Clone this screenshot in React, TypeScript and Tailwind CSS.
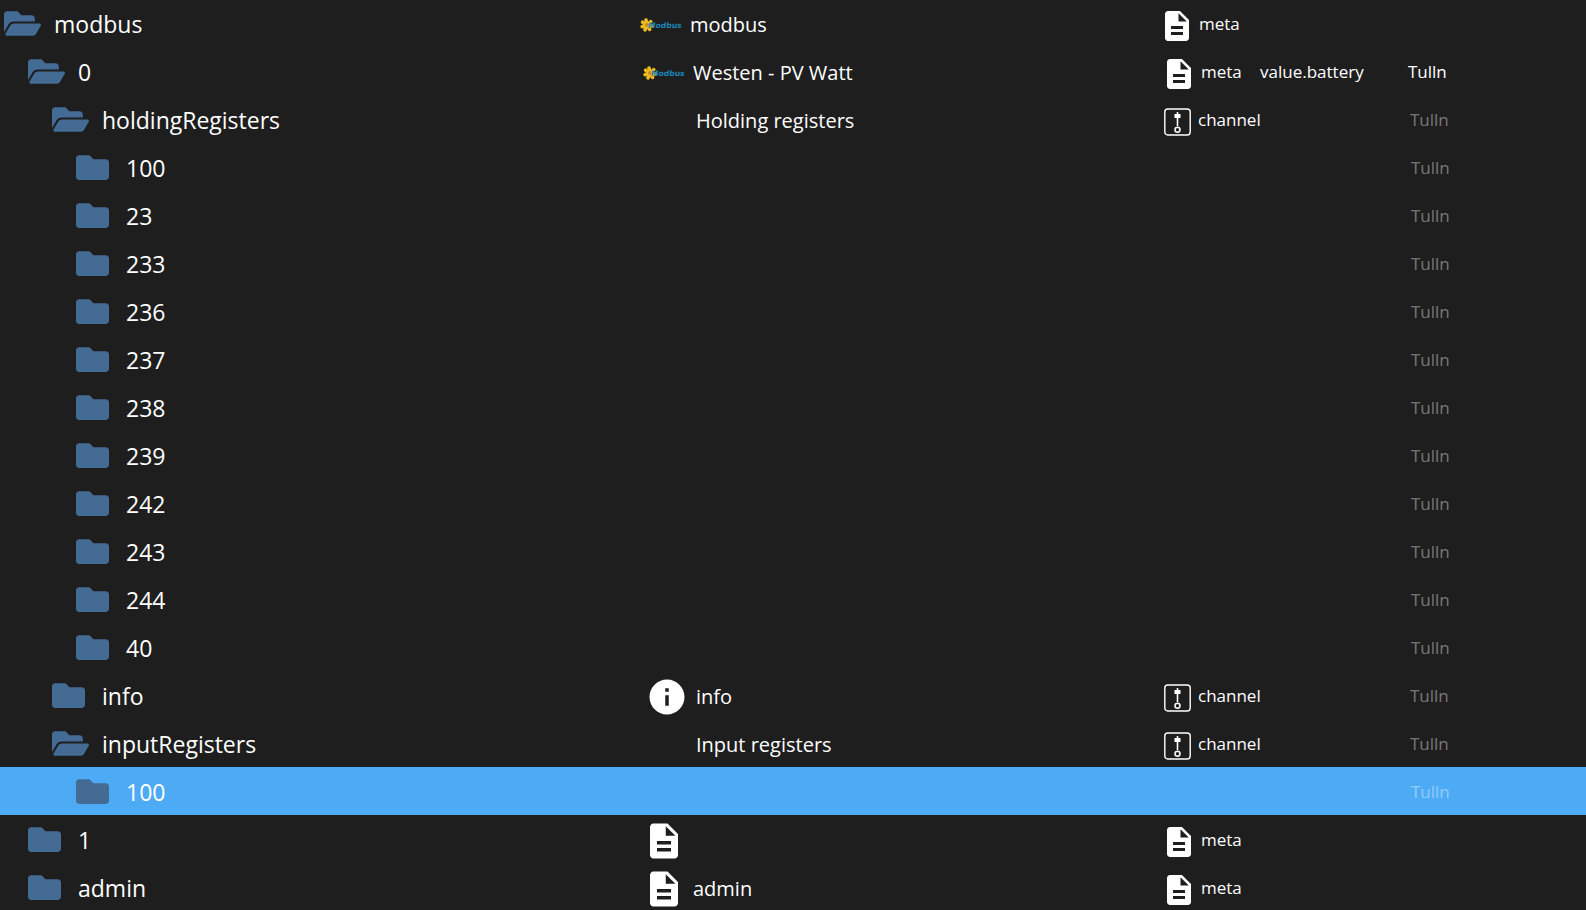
import { FaFolder, FaFolderOpen } from 'react-icons/fa';
import { MdDescription, MdInfo } from 'react-icons/md';

type IconName = 'modbus' | 'info' | 'document';

type TreeItem = {
  id: string;
  label: string;
  depth: 0 | 1 | 2 | 3;
  open?: boolean;
  icon?: IconName;
  name?: string;
  type?: 'meta' | 'channel';
  role?: string;
  room?: string;
  roomInherited?: boolean;
  selected?: boolean;
};

const registerItem = (label: string): TreeItem => ({
  id: `modbus.0.holdingRegisters.${label}`,
  label,
  depth: 3,
  room: 'Tulln',
  roomInherited: true,
});

const ITEMS: TreeItem[] = [
  { id: 'modbus', label: 'modbus', depth: 0, open: true, icon: 'modbus', name: 'modbus', type: 'meta' },
  {
    id: 'modbus.0',
    label: '0',
    depth: 1,
    open: true,
    icon: 'modbus',
    name: 'Westen - PV Watt',
    type: 'meta',
    role: 'value.battery',
    room: 'Tulln',
  },
  {
    id: 'modbus.0.holdingRegisters',
    label: 'holdingRegisters',
    depth: 2,
    open: true,
    name: 'Holding registers',
    type: 'channel',
    room: 'Tulln',
    roomInherited: true,
  },
  ...['100', '23', '233', '236', '237', '238', '239', '242', '243', '244', '40'].map(registerItem),
  {
    id: 'modbus.0.info',
    label: 'info',
    depth: 2,
    icon: 'info',
    name: 'info',
    type: 'channel',
    room: 'Tulln',
    roomInherited: true,
  },
  {
    id: 'modbus.0.inputRegisters',
    label: 'inputRegisters',
    depth: 2,
    open: true,
    name: 'Input registers',
    type: 'channel',
    room: 'Tulln',
    roomInherited: true,
  },
  {
    id: 'modbus.0.inputRegisters.100',
    label: '100',
    depth: 3,
    room: 'Tulln',
    roomInherited: true,
    selected: true,
  },
  { id: 'modbus.1', label: '1', depth: 1, icon: 'document', type: 'meta' },
  { id: 'modbus.admin', label: 'admin', depth: 1, icon: 'document', name: 'admin', type: 'meta' },
];

const TREE_INDENT = ['pl-1', 'pl-7', 'pl-[52px]', 'pl-[76px]'];
const NAME_INDENT = ['pl-0', 'pl-[3px]', 'pl-[6px]', 'pl-[8px]'];
const CELL_INDENT = ['pl-0', 'pl-[2px]', 'pl-1', 'pl-[5px]'];

function ModbusLogo() {
  return (
    <svg viewBox="0 0 42 14" className="block h-[14px] w-[42px]" role="img" aria-label="Modbus">
      <g stroke="#eebb1c" strokeWidth="3.6" strokeLinecap="round">
        <path d="M7 7 6 2" />
        <path d="M7 7l3.8-3.4" />
        <path d="M7 7l5 1" />
        <path d="M7 7l2.6 4.4" />
        <path d="M7 7l-2 4.8" />
        <path d="M7 7 2.2 8.6" />
        <path d="M7 7 2.6 4.2" />
      </g>
      <circle cx="7" cy="7" r="2" fill="#c98a1a" />
      <text
        x="8"
        y="10"
        fill="#1a86b8"
        fontFamily="DejaVu Sans, sans-serif"
        fontSize="7.6"
        fontStyle="italic"
        fontWeight="700">
        Modbus
      </text>
    </svg>
  );
}

function ChannelIcon() {
  return (
    <svg viewBox="0 0 27 28" className="block h-7 w-[27px] shrink-0" fill="none" stroke="white" aria-hidden="true">
      <rect x="0.8" y="1" width="25.4" height="26" rx="3" strokeWidth="1.4" />
      <path d="M13.5 4v14" strokeWidth="1.6" />
      <rect x="10.5" y="6" width="6" height="4" fill="white" stroke="none" />
      <circle cx="13.5" cy="21.8" r="2.5" strokeWidth="1.5" />
    </svg>
  );
}

function NameIcon({ icon }: { icon?: IconName }) {
  switch (icon) {
    case 'modbus':
      return <ModbusLogo />;
    case 'info':
      return <MdInfo size={42} className="shrink-0" />;
    case 'document':
      return <MdDescription size={42} className="shrink-0" />;
    default:
      return null;
  }
}

function TreeRow({ item }: { item: TreeItem }) {
  const cellIndent = CELL_INDENT[item.depth];

  return (
    <tr aria-selected={item.selected ?? false} className={item.selected ? 'h-12 bg-[#4dabf5]' : 'h-12'}>
      <td className={['p-0 pt-[2px]', TREE_INDENT[item.depth]].join(' ')}>
        <button type="button" aria-expanded={item.open ?? false} className="flex items-center text-[23px] leading-8">
          <span className="flex w-[50px] shrink-0 pb-[2px] text-[#436b93]">
            {item.open ? <FaFolderOpen className="h-[33px] w-[37px]" /> : <FaFolder className="h-[33px] w-[33px]" />}
          </span>
          {item.label}
        </button>
      </td>
      <td className={['p-0 pt-1', NAME_INDENT[item.depth]].join(' ')}>
        <div className="flex items-center text-[20px] leading-8">
          <span className="flex w-[50px] shrink-0">
            <NameIcon icon={item.icon} />
          </span>
          {item.name}
        </div>
      </td>
      <td className={['p-0 pt-[2px]', cellIndent].join(' ')}>
        {item.type && (
          <div className={['flex items-center', item.type === 'meta' ? 'gap-1' : 'gap-[7px]'].join(' ')}>
            <span className={['flex shrink-0 pt-[3px]', item.type === 'meta' ? 'pl-0' : 'pl-px'].join(' ')}>
              {item.type === 'meta' ? <MdDescription size={36} /> : <ChannelIcon />}
            </span>
            {item.type}
          </div>
        )}
      </td>
      <td className="p-0 pt-[2px]">{item.role}</td>
      <td className={['p-0 pt-[2px]', cellIndent, item.roomInherited ? 'text-white/40' : 'text-white'].join(' ')}>
        {item.room}
      </td>
    </tr>
  );
}

export default function App() {
  return (
    <main className="min-h-screen overflow-hidden bg-[#1e1e1e] font-['Open_Sans','Noto_Sans',sans-serif] text-white">
      <table className="-mt-px w-full table-fixed border-collapse text-[17px] leading-6">
        <colgroup>
          <col className="w-[640px]" />
          <col />
          <col className="w-[101px]" />
          <col className="w-[146px]" />
          <col className="w-[180px]" />
        </colgroup>
        <tbody>
          {ITEMS.map((item) => (
            <TreeRow key={item.id} item={item} />
          ))}
        </tbody>
      </table>
    </main>
  );
}
